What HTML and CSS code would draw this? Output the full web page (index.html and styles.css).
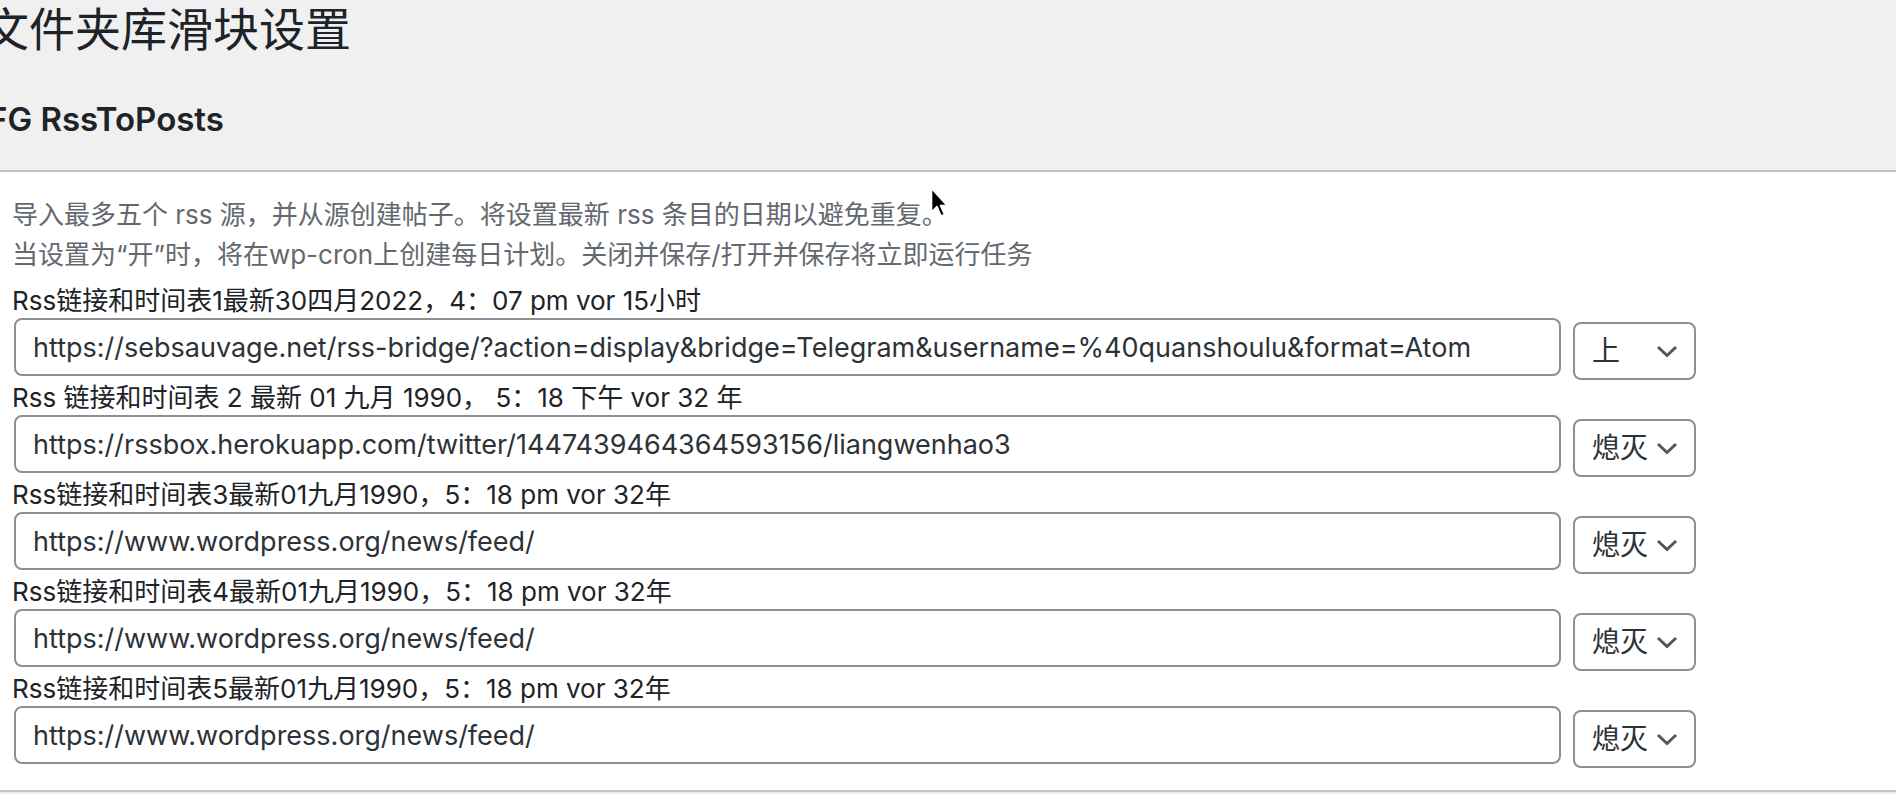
FILE: index.html
```html
<!DOCTYPE html>
<html lang="zh-CN">
<head>
<meta charset="utf-8">
<title>文件夹库滑块设置</title>
<link rel="stylesheet" href="styles.css">
</head>
<body>
<div class="page">
  <header class="head">
    <h1 class="title">文件夹库滑块设置</h1>
    <h2 class="subtitle">FG RssToPosts</h2>
  </header>
  <section class="panel">
    <p class="desc">导入最多五个 rss 源，并从源创建帖子。将设置最新 rss 条目的日期以避免重复。<br>当设置为“开”时，将在wp-cron上创建每日计划。关闭并保存/打开并保存将立即运行任务</p>

    <div class="feed">
      <label class="label">Rss链接和时间表1最新30四月2022，4：07 pm vor 15小时</label>
      <div class="row">
        <input class="url" type="text" value="https://sebsauvage.net/rss-bridge/?action=display&amp;bridge=Telegram&amp;username=%40quanshoulu&amp;format=Atom">
        <select class="state"><option>上</option><option>熄灭</option></select>
      </div>
    </div>

    <div class="feed">
      <label class="label">Rss 链接和时间表 2 最新 01 九月 1990， 5：18 下午 vor 32 年</label>
      <div class="row">
        <input class="url" type="text" value="https://rssbox.herokuapp.com/twitter/1447439464364593156/liangwenhao3">
        <select class="state"><option>熄灭</option><option>上</option></select>
      </div>
    </div>

    <div class="feed">
      <label class="label">Rss链接和时间表3最新01九月1990，5：18 pm vor 32年</label>
      <div class="row">
        <input class="url" type="text" value="https://www.wordpress.org/news/feed/">
        <select class="state"><option>熄灭</option><option>上</option></select>
      </div>
    </div>

    <div class="feed">
      <label class="label">Rss链接和时间表4最新01九月1990，5：18 pm vor 32年</label>
      <div class="row">
        <input class="url" type="text" value="https://www.wordpress.org/news/feed/">
        <select class="state"><option>熄灭</option><option>上</option></select>
      </div>
    </div>

    <div class="feed">
      <label class="label">Rss链接和时间表5最新01九月1990，5：18 pm vor 32年</label>
      <div class="row">
        <input class="url" type="text" value="https://www.wordpress.org/news/feed/">
        <select class="state"><option>熄灭</option><option>上</option></select>
      </div>
    </div>
  </section>
  <svg class="cursor" width="18" height="32" viewBox="0 0 18 32" aria-hidden="true">
    <path d="M1.5 1.5 L1.5 25 L7 19.5 L11 29 L14.5 27.5 L10.5 18.5 L17 18.5 Z" fill="#000" stroke="#fff" stroke-width="1.6" stroke-linejoin="round"/>
  </svg>
</div>
</body>
</html>
```

FILE: styles.css
```css
html, body {
  margin: 0;
  padding: 0;
}
body {
  background: #f0f0f1;
  font-family: Inter, "Noto Sans CJK SC", sans-serif;
  color: #1d2327;
  overflow: hidden;
}
.page {
  position: relative;
  width: 1896px;
  height: 794px;
  overflow: hidden;
}
.head {
  height: 170px;
  background: #f0f0f1;
}
.title {
  margin: 0 0 0 -17px;
  font-family: Inter, "Noto Sans CJK SC", sans-serif;
  font-size: 46px;
  font-weight: 400;
  line-height: 58px;
  color: #1d2327;
}
.subtitle {
  margin: 41px 0 0 -12px;
  font-size: 33px;
  font-weight: 600;
  line-height: 40px;
  color: #1d2327;
}
.panel {
  background: #fff;
  border-top: 2px solid #c3c4c7;
  border-bottom: 2px solid #c3c4c7;
  padding: 23px 0 22px 12px;
}
.desc {
  margin: 0 0 8px;
  font-size: 26px;
  line-height: 40px;
  color: #646970;
}
.feed {
  display: flex;
  flex-direction: column;
}
.label {
  display: block;
  height: 35px;
  font-size: 26px;
  line-height: 35px;
  color: #1d2327;
}
.row {
  display: flex;
  align-items: flex-start;
  gap: 12px;
  height: 62px;
  padding-left: 2px;
}
.url {
  box-sizing: border-box;
  width: 1547px;
  height: 58px;
  margin: 0;
  padding: 0 17px;
  border: 2px solid #8c8f94;
  border-radius: 8px;
  background: #fff;
  font-family: Inter, "Noto Sans CJK SC", sans-serif;
  font-size: 27px;
  color: #2c3338;
  outline: none;
}
.state {
  box-sizing: border-box;
  width: 123px;
  height: 58px;
  margin: 4px 0 0;
  padding: 0 40px 0 17px;
  border: 2px solid #8c8f94;
  border-radius: 8px;
  background: #fff url("data:image/svg+xml;utf8,<svg xmlns='http://www.w3.org/2000/svg' width='22' height='13' viewBox='0 0 22 13'><path d='M2 2 L11 10.5 L20 2' fill='none' stroke='%2350575e' stroke-width='3'/></svg>") no-repeat right 16px center;
  -webkit-appearance: none;
  appearance: none;
  font-family: Inter, "Noto Sans CJK SC", sans-serif;
  font-size: 28px;
  color: #2c3338;
}
.cursor {
  position: absolute;
  left: 930px;
  top: 187px;
}
```
